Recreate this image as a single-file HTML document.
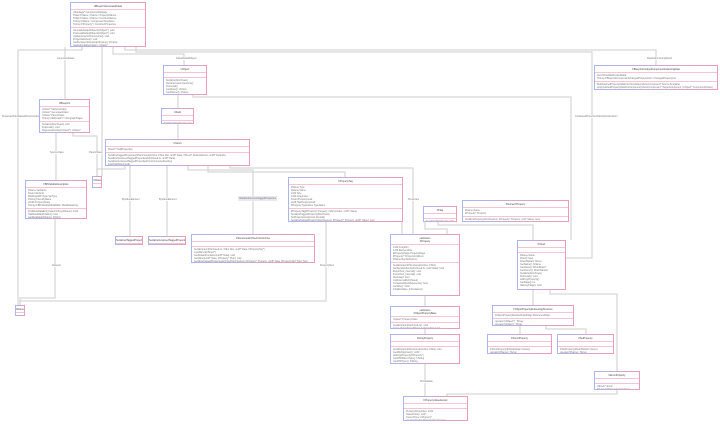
<!DOCTYPE html>
<html><head><meta charset="utf-8"><style>
body{margin:0;width:720px;height:424px;background:#fff;position:relative;overflow:hidden;font-family:"Liberation Sans",sans-serif}
.b{position:absolute;border:1px solid;border-image:linear-gradient(to right,#a9b6f2,#f09ab6) 1;background:#fff;box-sizing:border-box;font-size:2.4px;color:#777;line-height:3px;overflow:hidden}
.b .t{text-align:center;padding:1.5px 0;color:#444;border-bottom:1px solid #f2c4d4}
.b .s{padding:1px 2px;border-bottom:1px solid #f2c4d4;white-space:nowrap;overflow:hidden}
.b .s:last-child{border-bottom:none}
.l{position:absolute;font-size:2.4px;color:#777;background:#fff;white-space:nowrap}
svg{position:absolute;left:0;top:0}
</style></head><body>
<svg width="720" height="424"><g fill="none" stroke="#d6d6d6" stroke-width="1.2">
<polyline points="82,47 82,50 18,50 18,305"/>
<polyline points="65,47 65,99"/>
<polyline points="102,47 102,176"/>
<polyline points="113,47 113,54 184,54 184,65"/>
<polyline points="125,47 125,50 656,50 656,65"/>
<polyline points="136,47 136,52 592,52 592,258 566,258"/>
<polyline points="193,95 193,97 571,97 571,240"/>
<polyline points="178,95 178,108"/><polyline points="178,124 178,139"/>
<polyline points="56,133 56,180"/><polyline points="73,133 73,136 97,136 97,176"/>
<polyline points="55,219 55,298 20,298 20,305"/>
<polyline points="97,176 97,169 125,169 125,166"/>
<polyline points="130,166 130,236"/><polyline points="167,166 167,236"/>
<polyline points="188,166 188,170 253,170 253,234"/>
<polyline points="208,166 208,172 345,172 345,177"/>
<polyline points="230,166 230,168 413,168 413,234"/>
<polyline points="326,222 326,301 20,301 20,305"/>
<polyline points="402,222 402,234"/>
<polyline points="425,222 425,229 447,229 447,234"/>
<polyline points="438,222 438,225 533,225 533,240"/>
<polyline points="425,296 425,306"/><polyline points="425,329 425,334"/><polyline points="425,364 425,396"/>
<polyline points="533,290 533,306"/>
<polyline points="550,290 550,294 617,294 617,371"/>
<polyline points="617,390 617,394 447,394 447,396"/>
<polyline points="520,326 520,334"/><polyline points="546,326 546,329 586,329 586,334"/>
</g></svg>
<div class="l" style="left:57px;top:57px">GeneratedClass</div>
<div class="l" style="left:176px;top:57px">ClassDefaultObject</div>
<div class="l" style="left:2px;top:115px">PropertiesToInitializeWhenConstructed</div>
<div class="l" style="left:50px;top:151px">SourceClass</div>
<div class="l" style="left:89px;top:151px">ParentClass</div>
<div class="l" style="left:122px;top:198px">ByValueElement</div>
<div class="l" style="left:159px;top:198px">ByValueElement</div>
<div class="l" style="left:238px;top:196px;background:#e8e8ee;padding:1px">VariableStructureTaggedProperties</div>
<div class="l" style="left:52px;top:264px">NativeIn</div>
<div class="l" style="left:320px;top:264px">PropertyNext</div>
<div class="l" style="left:408px;top:198px">Properties</div>
<div class="l" style="left:575px;top:115px">ContainedPropertiesToFindConstruction</div>
<div class="l" style="left:647px;top:57px">ReplicationCompResult</div>
<div class="l" style="left:420px;top:380px">PrivateData</div>

<div class="b" style="left:70px;top:2px;width:76px;height:45px"><div class="t">UBlueprintGeneratedClass</div><div class="s">UPackage* ConstructorPackage<br>TMap&lt;FName, FName&gt; PropertyNames<br>TMap&lt;FName, FName&gt; FunctionNames<br>TArray&lt;FName&gt; ComponentTemplates<br>TArray&lt;FProperty*&gt; ConstructProperties</div><div class="s">GenerateDefaultObject(UObject*): void<br>PostLoadDefaultObject(UObject*): void<br>UpdateCustomPropertyList(): void<br>PurgeClass(bool): void<br>GetPersistentUberGraphFrame(): FFrame<br>GetAuthoritativeClass(): UClass*</div></div>
<div class="b" style="left:163px;top:65px;width:44px;height:30px"><div class="t">UObject</div><div class="s" style="height:2px"></div><div class="s">Serialize(FArchive&amp;)<br>DeclareCustomVersions()<br>PostLoad()<br>GetClass(): UClass<br>GetFName(): FName</div></div>
<div class="b" style="left:161px;top:108px;width:33px;height:16px"><div class="t">UField</div><div class="s" style="height:2px"></div><div class="s">Serialize(FArchive&amp;): void</div></div>
<div class="b" style="left:105px;top:139px;width:145px;height:27px"><div class="t">UStruct</div><div class="s">FField* ChildProperties</div><div class="s">SerializeTaggedProperties(FStructuredArchive::FSlot Slot, uint8* Data, UStruct* DefaultsStruct, uint8* Defaults)<br>SerializeVersionedTaggedProperties(FArchive&amp; Ar, uint8* Data)<br>SerializeVersionedTaggedPropertiesFromConnectedCache()<br>LinkChild(FArchive&amp;)</div></div>
<div class="b" style="left:39px;top:99px;width:51px;height:34px"><div class="t">UBlueprint</div><div class="s">UClass* SkeletonClass<br>UClass* GeneratedClass<br>UClass* ParentClass<br>TArray&lt;UEdGraph*&gt; UbergraphPages</div><div class="s">Serialize(FArchive&amp;): void<br>PostLoad(): void<br>RegenerateClass(UClass*): UClass*</div></div>
<div class="b" style="left:25px;top:180px;width:62px;height:39px"><div class="t">FBPVariableDescription</div><div class="s">FName VarName<br>FGuid VarGuid<br>FEdGraphPinType VarType<br>FString FriendlyName<br>uint64 PropertyFlags<br>TArray&lt;FBPVariableMetaData&gt; MetaDataArray</div><div class="s">FindMetaDataEntryIndexForKey(FName): int32<br>HasMetaData(FName): bool<br>GetMetaData(FName): FString</div></div>
<div class="b" style="left:92px;top:176px;width:10px;height:12px"><div class="t">UClass</div><div class="s" style="height:2px"></div></div>
<div class="b" style="left:15px;top:305px;width:10px;height:11px"><div class="t">FName</div><div class="s" style="height:2px"></div></div>
<div class="b" style="left:115px;top:236px;width:28px;height:9px"><div class="t">SerializedTaggedProperties</div><div class="s" style="height:2px"></div></div>
<div class="b" style="left:148px;top:236px;width:38px;height:9px"><div class="t">SerializeVersionedTaggedProperties</div><div class="s" style="height:2px"></div></div>
<div class="b" style="left:191px;top:234px;width:124px;height:29px"><div class="t">FStructuredArchiveFromArchive</div><div class="s" style="height:2px"></div><div class="s">SerializeItem(FArchive&amp; Ar, FSlot Slot, uint8* Data, FPropertyTag*)<br>LoadStruct(FStruct*)<br>GetDefaultContainer(uint8* Data): void<br>GetValue(uint8* Data, FProperty* Prop): void<br>SerializeTaggedPropertiesArchive(FArchive&amp; Ar, FProperty* Property, uint8* Data, FPropertyTag* Tag): bool</div></div>
<div class="b" style="left:288px;top:177px;width:115px;height:45px"><div class="t">FPropertyTag</div><div class="s">FName Type<br>FName Name<br>int32 Size<br>int32 ArrayIndex<br>FGuid PropertyGuid<br>uint8 HasPropertyGuid<br>FPropertyTypeName TypeName</div><div class="s">FPropertyTag(FProperty* Property, int32 InIndex, uint8* Value)<br>SerializeTaggedProperty(FArchive&amp;)<br>SetPropertyGuid(const FGuid&amp;)<br>SerializeTaggedProperty(FArchive&amp; Ar, FProperty* Property, uint8* Value): void</div></div>
<div class="b" style="left:423px;top:206px;width:34px;height:16px"><div class="t">FFlag</div><div class="s" style="height:2px"></div><div class="s">Serialize(FArchive&amp;): void</div></div>
<div class="b" style="left:462px;top:200px;width:107px;height:22px"><div class="t">FNumericProperty</div><div class="s">FName Name<br>FProperty* Property</div><div class="s">SerializeProperty(FArchive&amp; Ar, FProperty* Property, void* Value): bool</div></div>
<div class="b" style="left:390px;top:234px;width:70px;height:62px"><div class="t">«abstract»<br>FProperty</div><div class="s">int32 ArrayDim<br>int32 ElementSize<br>EPropertyFlags PropertyFlags<br>FProperty* PropertyLinkNext<br>FName RepNotifyFunc</div><div class="s">SerializeItem(FStructuredArchive::FSlot)<br>NetSerializeItem(FArchive&amp; Ar, void* Data): bool<br>ExportText_Internal(): void<br>ImportText_Internal(): void<br>Identical(): bool<br>LinkInternal(FArchive&amp;)<br>ContainsObjectReference(): bool<br>GetSize(): int32<br>InitializeValue_InContainer()</div></div>
<div class="b" style="left:517px;top:240px;width:49px;height:50px"><div class="t">FStruct</div><div class="s" style="height:2px"></div><div class="s">FName Name<br>FField* Next<br>FFieldVariant Owner<br>GetName(): FName<br>GetClass(): FFieldClass*<br>GetOwner(): FFieldVariant<br>Serialize(FArchive&amp;)<br>PostLoad(): void<br>AddCppProperty()<br>GetFlags(): int<br>HasAnyFlags(): bool</div></div>
<div class="b" style="left:390px;top:306px;width:70px;height:23px"><div class="t">«abstract»<br>FObjectPropertyBase</div><div class="s">UClass* PropertyClass</div><div class="s">SerializeItem(FArchive&amp; Ar): void<br>ConvertFromType(FPropertyTag&amp; Tag): bool</div></div>
<div class="b" style="left:390px;top:334px;width:70px;height:30px"><div class="t">FArrayProperty</div><div class="s" style="height:2px"></div><div class="s">SerializeItem(FStructuredArchive::FSlot): void<br>GetMinAlignment(): int32<br>AddCppProperty(FProperty*)<br>GetCPPMacroType(): FString<br>GetCPPType(): FString<br>LinkInternal(FArchive&amp;): void</div></div>
<div class="b" style="left:492px;top:305px;width:82px;height:21px"><div class="t">FObjectPropertyRedirectingStructure</div><div class="s">FObjectPropertyRedirectFieldFlags ReferenceFlags</div><div class="s">operator(UObject*): TArray<br>operator(UClass*): TArray</div></div>
<div class="b" style="left:487px;top:334px;width:65px;height:20px"><div class="t">FStructProperty</div><div class="s" style="height:2px"></div><div class="s">FStructProperty(FFieldVariant Owner)<br>operator(FName): TArray</div></div>
<div class="b" style="left:557px;top:334px;width:57px;height:20px"><div class="t">FSetProperty</div><div class="s" style="height:2px"></div><div class="s">FSetProperty(FFieldVariant Owner)<br>operator(FName): TArray</div></div>
<div class="b" style="left:594px;top:371px;width:46px;height:19px"><div class="t">FEnumProperty</div><div class="s" style="height:2px"></div><div class="s">UEnum* Enum<br>FNumericProperty* Underlying</div></div>
<div class="b" style="left:403px;top:396px;width:65px;height:25px"><div class="t">FPropertyValueIterator</div><div class="s" style="height:2px"></div><div class="s">PropertyArrayIndex: int32<br>ValuePointer: void*<br>CurrentType: FProperty*<br>operator bool(): PropertyValueIterator</div></div>
<div class="b" style="left:594px;top:65px;width:124px;height:25px"><div class="t">FBlueprintCookedComponentInstancingData</div><div class="s">bool bHasValidCookedData<br>TArray&lt;FBlueprintComponentChangedPropertyInfo&gt; ChangedPropertyList</div><div class="s">BuildCachedPropertyDataFromTemplate(UActorComponent* SourceTemplate)<br>ApplyCachedPropertyDataToComponent(UActorComponent* TargetComponent, UObject* ComponentOwner)</div></div>
</body></html>
